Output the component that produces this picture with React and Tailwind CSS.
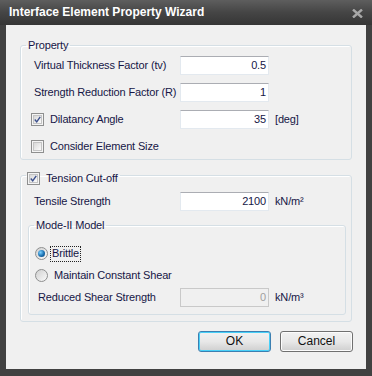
import React from "react";

const txt = "text-[#161646]";

function Check({ checked }) {
  return (
    <div className="w-[13px] h-[13px] border border-[#8e8f8f] bg-[#f4f4f4] p-[1px] shrink-0">
      <div className="w-full h-full border border-[#c4c4c4] bg-gradient-to-br from-[#d8d8d8] to-[#fbfbfb] flex items-center justify-center">
        {checked && (
          <svg width="9" height="9" viewBox="0 0 9 9">
            <path d="M1 4.5 L3.5 7.5 L8 1" fill="none" stroke="#3b4f8c" strokeWidth="1.8" />
          </svg>
        )}
      </div>
    </div>
  );
}

function Radio({ checked }) {
  return (
    <div className="w-[13px] h-[13px] rounded-full border border-[#8e8f8f] bg-gradient-to-br from-[#d0d0d0] to-[#fafafa] flex items-center justify-center shrink-0">
      {checked && (
        <div className="w-[7px] h-[7px] rounded-full bg-[radial-gradient(circle_at_35%_35%,#7ad0ff,#1a6fb0_55%,#0d3e6e)]" />
      )}
    </div>
  );
}

function Input({ value, disabled }) {
  return (
    <div
      className={
        "w-[89px] h-[19px] border flex items-center justify-end pr-[2px] shrink-0 " +
        (disabled
          ? "bg-[#f0f0f0] border-[#c9c9c9] text-[#a0a0a0]"
          : "bg-white border-[#e3e9ef] border-t-[#abadb3] " + txt)
      }
    >
      {value}
    </div>
  );
}

function Row({ label, value, unit, disabled, labelW = "w-[146px]" }) {
  return (
    <div className="flex items-center h-[19px]">
      <div className={labelW + " whitespace-nowrap shrink-0 " + txt}>{label}</div>
      <Input value={value} disabled={disabled} />
      {unit && <div className={"ml-[6px] whitespace-nowrap " + txt}>{unit}</div>}
    </div>
  );
}

export default function App() {
  return (
    <div
      className="w-[372px] h-[376px] bg-[#414141] flex flex-col text-[11px] leading-[13px] tracking-[-0.15px]"
      style={{ fontFamily: '"Liberation Sans", Arial, sans-serif' }}
    >
      {/* title bar */}
      <div className="h-[25px] flex items-center justify-between pl-[9px] pr-[9px] bg-gradient-to-b from-[#5e5e5e] via-[#454545] to-[#363636]">
        <span className="text-white font-bold text-[12px] tracking-normal">Interface Element Property Wizard</span>
        <svg width="11" height="9" viewBox="0 0 11 9" className="mt-[1px]">
          <path d="M1 0.5 L10 8.5 M10 0.5 L1 8.5" stroke="#a8a8a8" strokeWidth="2.4" />
        </svg>
      </div>

      {/* client */}
      <div className="mx-[6px] h-[344px] bg-[#f0f0f0] pt-[14px] pl-[14px] pr-[13px] flex flex-col">
        {/* Property */}
        <fieldset className="w-[332px] border border-[#d5dfe5] rounded-[3px] shadow-[inset_1px_1px_0_#fff] pb-[3px]">
          <legend className={"ml-[5px] px-[2px] leading-[13px] " + txt}>Property</legend>
          <div className="flex flex-col gap-[8px] pt-[4px] pl-[13px]">
            <Row label="Virtual Thickness Factor (tv)" value="0.5" />
            <Row label="Strength Reduction Factor (R)" value="1" />
            <div className="flex items-center h-[19px]">
              <div className="w-[146px] flex items-center -ml-[3px]">
                <Check checked />
                <span className={"ml-[6px] " + txt}>Dilatancy Angle</span>
              </div>
              <div className="ml-[3px] flex items-center">
                <Input value="35" />
                <div className={"ml-[6px] " + txt}>[deg]</div>
              </div>
            </div>
            <div className="flex items-center h-[19px] -ml-[3px]">
              <Check />
              <span className={"ml-[6px] " + txt}>Consider Element Size</span>
            </div>
          </div>
        </fieldset>

        {/* Tension */}
        <fieldset className="mt-[6px] w-[332px] border border-[#d5dfe5] rounded-[3px] shadow-[inset_1px_1px_0_#fff] pb-[6px]">
          <legend className="ml-[5px] pl-[1px] pr-[2px] pt-[6px] flex items-center">
            <Check checked />
            <span className={"ml-[6px] " + txt}>Tension Cut-off</span>
          </legend>
          <div className="pl-[13px] mt-[7px]">
            <Row label="Tensile Strength" value="2100" unit="kN/m²" />
          </div>
          <fieldset className="mt-[8px] ml-[7px] w-[318px] border border-[#d5dfe5] rounded-[3px] shadow-[inset_1px_1px_0_#fff] pb-[7px]">
            <legend className={"ml-[5px] px-[2px] leading-[13px] " + txt}>Mode-II Model</legend>
            <div className="flex flex-col gap-[3px] mt-[12px]">
              <div className="flex items-center h-[19px] pl-[6px]">
                <Radio checked />
                <span className={"ml-[2px] px-[1px] h-[16px] flex items-center border border-dotted border-[#222] " + txt}>Brittle</span>
              </div>
              <div className="flex items-center h-[19px] pl-[6px]">
                <Radio />
                <span className={"ml-[6px] " + txt}>Maintain Constant Shear</span>
              </div>
              <div className="pl-[9px]">
                <Row label="Reduced Shear Strength" value="0" unit="kN/m³" disabled labelW="w-[142px]" />
              </div>
            </div>
          </fieldset>
        </fieldset>

        {/* Buttons */}
        <div className="mt-[9px] flex justify-end gap-[9px]">
          <button className="w-[73px] h-[21px] rounded-[3px] border border-[#3c7fb1] shadow-[inset_0_0_0_1px_#48d0f8] bg-gradient-to-b from-[#f2f2f2] via-[#e8e8e8] to-[#cfcfcf] text-[12px] text-[#111] tracking-normal">
            OK
          </button>
          <button className="w-[73px] h-[21px] rounded-[3px] border border-[#707070] shadow-[inset_0_0_0_1px_#fcfcfc] bg-gradient-to-b from-[#f2f2f2] via-[#e8e8e8] to-[#cfcfcf] text-[12px] text-[#111] tracking-normal">
            Cancel
          </button>
        </div>
      </div>
    </div>
  );
}
